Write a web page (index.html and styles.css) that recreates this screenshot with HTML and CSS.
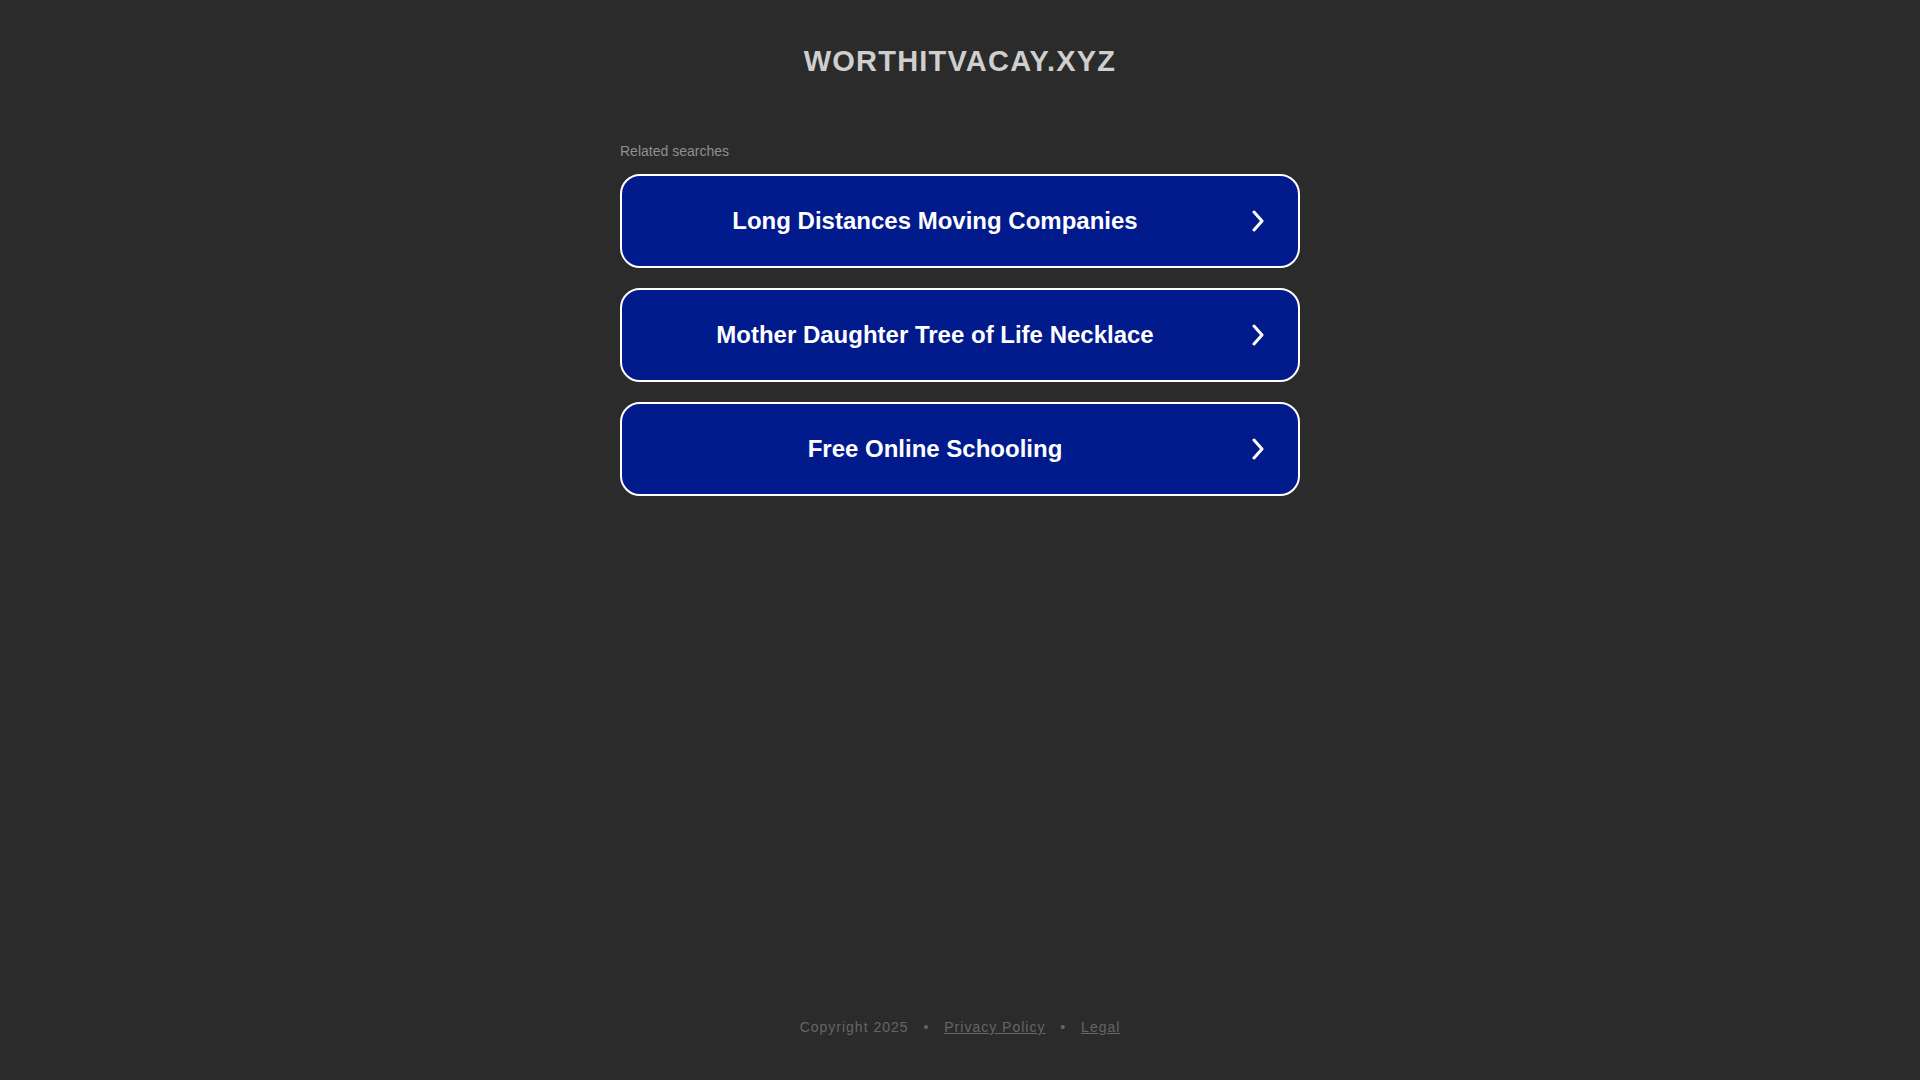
FILE: index.html
```html
<!DOCTYPE html>
<html lang="en">
<head>
<meta charset="utf-8">
<title>worthitvacay.xyz</title>
<link rel="stylesheet" href="styles.css">
</head>
<body>
<div class="page">
  <header class="header">
    <h1 class="domain">WORTHITVACAY.XYZ</h1>
  </header>
  <main class="main">
    <div class="related">
      <p class="related-title">Related searches</p>
      <a class="search" href="#">
        <span class="search-text">Long Distances Moving Companies</span>
        <span class="search-arrow"><svg width="14" height="22" viewBox="0 0 14 22"><path d="M3 2 L11 11 L3 20" fill="none" stroke="#fff" stroke-width="3" stroke-linecap="round" stroke-linejoin="round"/></svg></span>
      </a>
      <a class="search" href="#">
        <span class="search-text">Mother Daughter Tree of Life Necklace</span>
        <span class="search-arrow"><svg width="14" height="22" viewBox="0 0 14 22"><path d="M3 2 L11 11 L3 20" fill="none" stroke="#fff" stroke-width="3" stroke-linecap="round" stroke-linejoin="round"/></svg></span>
      </a>
      <a class="search" href="#">
        <span class="search-text">Free Online Schooling</span>
        <span class="search-arrow"><svg width="14" height="22" viewBox="0 0 14 22"><path d="M3 2 L11 11 L3 20" fill="none" stroke="#fff" stroke-width="3" stroke-linecap="round" stroke-linejoin="round"/></svg></span>
      </a>
    </div>
  </main>
  <footer class="footer">
    <span>Copyright 2025</span>
    <span class="dot">•</span>
    <a href="#">Privacy Policy</a>
    <span class="dot">•</span>
    <a href="#">Legal</a>
  </footer>
</div>
</body>
</html>
```
FILE: styles.css
```css
html, body {
  margin: 0;
  padding: 0;
  background: #2b2b2b;
  font-family: "Liberation Sans", Arial, sans-serif;
}
.page {
  min-height: 100vh;
  display: flex;
  flex-direction: column;
}
.header {
  padding-top: 42px;
  text-align: center;
}
.domain {
  margin: 0;
  font-size: 29px;
  line-height: 38px;
  font-weight: bold;
  color: #cfcfcf;
  letter-spacing: 1.2px;
}
.main {
  display: flex;
  justify-content: center;
  padding-top: 62px;
}
.related {
  width: 680px;
}
.related-title {
  margin: 0 0 14px 0;
  font-size: 14px;
  line-height: 18px;
  color: #8f8f8f;
}
.search {
  display: flex;
  align-items: center;
  box-sizing: border-box;
  height: 94px;
  margin-bottom: 20px;
  border: 2px solid #fff;
  border-radius: 20px;
  background: #011a8c;
  color: #fff;
  text-decoration: none;
}
.search-text {
  flex: 1;
  text-align: center;
  padding-left: 30px;
  font-size: 24px;
  font-weight: bold;
}
.search-arrow {
  width: 80px;
  display: flex;
  justify-content: center;
}
.footer {
  margin-top: auto;
  padding-bottom: 43px;
  text-align: center;
  font-size: 14px;
  line-height: 20px;
  letter-spacing: 1px;
  color: #666;
}
.footer a {
  color: #666;
}
.dot {
  margin: 0 10px;
}
```
